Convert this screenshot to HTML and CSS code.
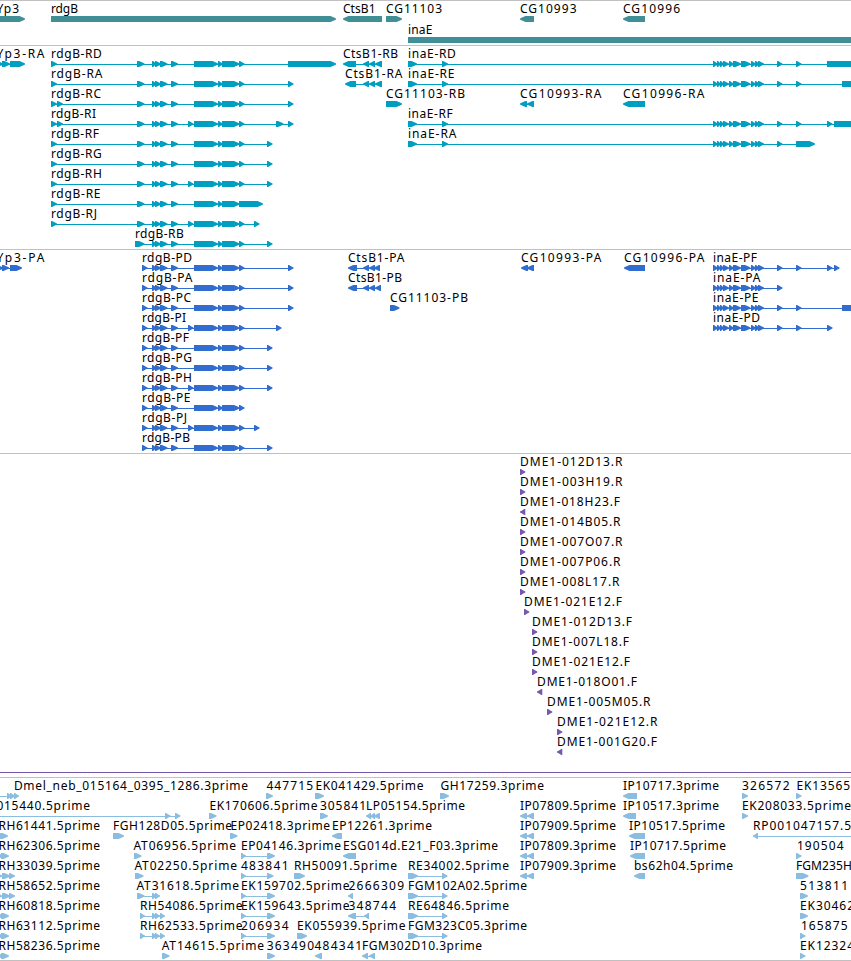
FILE: index.html
```html
<!DOCTYPE html>
<html lang="en">
<head>
<meta charset="utf-8">
<title>Genome tracks</title>
<link rel="stylesheet" href="styles.css">
</head>
<body>
<main class="browser">
  <section class="track track-gene" id="gene"></section>
  <section class="track track-mrna" id="mrna"></section>
  <section class="track track-protein" id="protein"></section>
  <section class="track track-clone" id="clone"></section>
  <section class="track track-est" id="est"></section>
</main>
<script src="tracks.js"></script>
</body>
</html>
```
FILE: styles.css
```css
body {
  margin: 0;
  background: #fff;
}

.browser {
  display: flex;
  flex-direction: column;
  width: 851px;
  height: 961px;
  overflow: hidden;
}

.track {
  box-sizing: border-box;
  flex: none;
  border-top: 1px solid #c0c0c0;
  overflow: hidden;
}

.track-gene { height: 45px; color: #408f96; }
.track-mrna { height: 204px; color: #009fc1; }
.track-protein { height: 204px; color: #316dce; }
.track-clone { height: 324px; color: #7758ae; }
.track-est { height: 184px; color: #8abddf; border-bottom: 1px solid #c0c0c0; }

.row {
  display: block;
  width: 851px;
  height: 20px;
  overflow: visible;
}

.track-gene .row { height: 21px; }

.label {
  font-family: "Noto Sans", "Open Sans", sans-serif;
  font-size: 12px;
  fill: #000;
}

.feature { fill: currentColor; }

.span { shape-rendering: crispEdges; fill: currentColor; }
```
FILE: tracks.js
```js
const NS = 'http://www.w3.org/2000/svg';

// A feature is [name, labelStart, labelEnd, parts, direction, lineEnd].
// Parts are [start, end] pairs joined by a thin line.
const body = [[152, 157], [155, 161], [160, 167.5], [171, 178]];
const extra = [[188, 193.5]];
const tail = [[194, 218], [218, 223], [222, 239.5]];
const last = [[239, 244.5]];
const rdg = (head, more, end) => [...head, [137, 144.5], ...body, ...more, ...tail, ...end];
const rdgP = (more, end) => [[142, 147.5], ...body, ...more, ...tail, ...last, ...end];
const ina = [[713, 718], [717, 721.5], [720, 724.5], [723, 729], [729, 734], [733, 741],
  [741, 750.5], [751, 756], [755, 760], [758, 764], [777, 782.5]];
const inaR = [[408, 417], [442, 448], ...ina];
const s = [[51, 57]], s2 = [[51, 57], [57, 63]];
const e = x => [[x, x + 5.5]];
const L = -1, R = 1;
const yp = (n, parts) => [n, -3, 44, parts];
const rh = (n, parts) => [n, -1, 99.5, parts];
const two = [[-5, 3], [1, 9]], three = [[-5, 2], [2, 10], [9, 15]];
const pair = [[241, 246], [267, 275]];
const re = [[408, 418], [442, 447.5]];
const ip = n => [n, 520.5, 615.5, [[520, 527], [527, 534]], L];

const tracks = {
  gene: [
    [['Yp3', -3, 18.5, [[-20, 25]]], ['rdgB', 51.5, 77.5, [[51, 336]]],
      ['CtsB1', 343.5, 375, [[343, 382]], L], ['CG11103', 386.5, 441.5, [[386, 402]]],
      ['CG10993', 520.5, 576, [[520, 534]], L], ['CG10996', 623.5, 679.5, [[623, 645]], L]],
    [['inaE', 408.5, 432, [[408, 900]]]]
  ],
  mrna: [
    [yp('Yp3-RA', [[-5, 3], [2, 10], [10, 25]]),
      ['rdgB-RD', 51.5, 101.3, [...rdg(s, [], last), [288, 336]]],
      ['CtsB1-RB', 343.5, 397.5, [[343, 356], [363, 369], [369, 375], [375, 382]], L],
      ['inaE-RD', 408.5, 455.3, [...inaR, [796, 801.5], [827, 900]]]],
    [['rdgB-RA', 51.5, 102, rdg(s, [], [...last, ...e(288)])],
      ['CtsB1-RA', 345.5, 402, [[345, 356], [363, 369], [369, 375], [375, 382]], L],
      ['inaE-RE', 408.5, 454, [...inaR, [796, 801.5], [842, 900]]]],
    [['rdgB-RC', 51.5, 100.5, rdg(s2, [], [...last, ...e(288)])],
      ['CG11103-RB', 386.5, 464.5, [[386, 402]]],
      ['CG10993-RA', 520.5, 601, [[520, 527], [527, 534]], L],
      ['CG10996-RA', 623.5, 704, [[623, 645]], L]],
    [['rdgB-RI', 51.5, 95.5, rdg(s2, extra, [...last, [276, 283.5], ...e(288)])],
      ['inaE-RF', 408.5, 452.3, [...inaR, [796, 801.5], [827, 832.5], [834, 900]]]],
    [['rdgB-RF', 51.5, 98.5, rdg(s, [], [...last, ...e(267)])],
      ['inaE-RA', 408.5, 456, [...inaR, [796, 815]]]],
    [['rdgB-RG', 51.5, 101.3, rdg(s, [], [...last, ...e(267)])]],
    [['rdgB-RH', 51.5, 101.3, rdg(s, extra, [...last, ...e(267)])]],
    [['rdgB-RE', 51.5, 100, rdg(s, [], [[239, 263]])]],
    [['rdgB-RJ', 51.5, 96.5, rdg(s, extra, [...last, ...e(254)])]],
    [['rdgB-RB', 135.5, 183.3, [[135, 144.5], ...body, ...tail, ...last, ...e(267)]]]
  ],
  protein: [
    [yp('Yp3-PA', [[-5, 3], [2, 9], [10, 22]]), ['rdgB-PD', 142.5, 191.5, rdgP([], e(288))],
      ['CtsB1-PA', 348.5, 404, [[348, 357], [363, 369], [369, 375], [374, 380]], L],
      ['CG10993-PA', 521.5, 601, [[521, 528], [527, 534]], L],
      ['CG10996-PA', 624.5, 704, [[624, 645]], L],
      ['inaE-PF', 713.5, 756.5, [...ina, [796, 801.5], [827, 832.5], [834, 839.5]]]],
    [['rdgB-PA', 142.5, 192, rdgP([], e(288))],
      ['CtsB1-PB', 348.5, 401.5, [[348, 357], [363, 369], [369, 375], [375, 381]], L],
      ['inaE-PA', 713.5, 760, ina]],
    [['rdgB-PC', 142.5, 190.5, rdgP([], e(288))], ['CG11103-PB', 390.5, 467.5, [[390, 399.5]]],
      ['inaE-PE', 713.5, 758, [...ina, [796, 801.5], [842, 900]]]],
    [['rdgB-PI', 142.5, 185.5, rdgP(extra, e(276))],
      ['inaE-PD', 713.5, 759.5, [...ina, [796, 801.5], [827, 832.5]]]],
    [['rdgB-PF', 142.5, 188.5, rdgP([], e(267))]],
    [['rdgB-PG', 142.5, 191.5, rdgP([], e(267))]],
    [['rdgB-PH', 142.5, 191.5, rdgP(extra, e(267))]],
    [['rdgB-PE', 142.5, 190, rdgP([], [])]],
    [['rdgB-PJ', 142.5, 186.5, rdgP(extra, e(254))]],
    [['rdgB-PB', 142.5, 189.5, rdgP([], e(267))]]
  ],
  clone: [
    ['DME1-012D13.R', 520, 622], ['DME1-003H19.R', 520, 622], ['DME1-018H23.F', 520, 619.5, L],
    ['DME1-014B05.R', 520, 620], ['DME1-007O07.R', 520, 622], ['DME1-007P06.R', 520, 620],
    ['DME1-008L17.R', 520, 619], ['DME1-021E12.F', 524, 621.5], ['DME1-012D13.F', 532, 631.5],
    ['DME1-007L18.F', 532, 628.5], ['DME1-021E12.F', 532, 629.5], ['DME1-018O01.F', 537, 636.5, L],
    ['DME1-005M05.R', 547, 650], ['DME1-021E12.R', 557, 657], ['DME1-001G20.F', 557, 656.5, L]
  ].map(([n, a, b, d]) => [[n, a + 0.7, b, [[a, a + 5.3]], d]]).concat([[['', 0, 0, [[-20, -10], [900, 920]]]]]),
  est: [
    [['Dmel_neb_015164_0395_1286.3prime', 14.5, 247.5, [[-20, -10], [7, 12], [10, 15], [14, 19]]],
      ['447715', 267, 312.5, [[266, 273]]], ['EK041429.5prime', 316, 423, [[315, 324]]],
      ['GH17259.3prime', 441, 543.5, [[440, 449]]], ['IP10717.3prime', 623.5, 718.5, [[623, 637]], L],
      ['326572', 742.5, 789, [[742, 748]]], ['EK13565', 797, 849.5, [[796, 801.5]]]],
    [['015440.5prime', -3, 89.5, [[-20, -10], [165, 170.5], [175, 180.5]]],
      ['EK170606.5prime', 210, 317, [[209, 216.5]]], ['305841', 320.5, 365.5, [[320, 328]]],
      ['LP05154.5prime', 366.5, 464.5, [[366, 371], [370, 375], [374, 380]], L],
      ip('IP07809.5prime'), ['IP10517.3prime', 623.5, 718.5, [[623, 636]], L],
      ['EK208033.5prime', 742.5, 850.5, [[742, 748]]]],
    [rh('RH61441.5prime', [[-5, 2], [0, 8]]), ['FGH128D05.5prime', 113.5, 231.5, [[113, 124]]],
      ['EP02418.3prime', 231, 329.5, [[230, 237.5]]], ['EP12261.3prime', 332.5, 431.5, [[332, 342]], L],
      ip('IP07909.5prime'), ['IP10517.5prime', 629.5, 724.5, [[629, 645]], L],
      ['RP001047157.5', 753.5, 850.5, [[753, 758], [900, 920]], L]],
    [rh('RH62306.5prime', two), ['AT06956.5prime', 134, 235.5, [[134, 141.5]]],
      ['EP04146.3prime', 241.5, 340.5, pair], ['ESG014d.E21_F03.3prime', 343.7, 497.5, [[343, 356]], L],
      ip('IP07809.3prime'), ['IP10717.5prime', 630.5, 725.5, [[630, 645]], L],
      ['190504', 797.5, 843, [[796, 801.5]]]],
    [rh('RH33039.5prime', three), ['AT02250.5prime', 135, 236.5, [[135, 143.5]]],
      ['483841', 241.5, 288, [[241, 246], [267, 273.5]]], ['RH50091.5prime', 294.5, 396.5, [[294, 305]]],
      ['RE34002.5prime', 408.5, 508.5, re], ip('IP07909.3prime'),
      ['bs62h04.5prime', 634.5, 732.5, [[634, 645]], L], ['FGM235H', 796.5, 851.5, [[796, 808.5]]]],
    [rh('RH58652.5prime', three), ['AT31618.5prime', 137, 238.5, [[137, 144.5], [152, 157], [155, 160]]],
      ['EK159702.5prime', 241.5, 349, pair], ['2666309', 349, 403.5, [[348, 353]], L],
      ['FGM102A02.5prime', 408.5, 526.5, re], ['513811', 800.5, 847.5, [[800, 808]]]],
    [rh('RH60818.5prime', two), ['RH54086.5prime', 140.5, 242, [[140, 145], [152, 157], [155, 160], [160, 165]]],
      ['EK159643.5prime', 241.5, 349, pair], ['348744', 349, 395.5, [[348, 356], [364, 369]], L],
      ['RE64846.5prime', 408.5, 508.5, re], ['EK30462', 800.5, 853.5, [[800, 808]]]],
    [rh('RH63112.5prime', two), ['RH62533.5prime', 140.5, 242, [[140, 145], [152, 157], [155, 160], [160, 165]]],
      ['206934', 241.5, 288, pair], ['EK055939.5prime', 297.5, 405, [[297, 307]]],
      ['FGM323C05.3prime', 408.5, 526.5, re], ['165875', 801.5, 847, [[800, 805.5]]]],
    [rh('RH58236.5prime', two), ['AT14615.5prime', 162.3, 263.5, [[162, 169.5]]],
      ['363490', 267.3, 313.5, [[267, 275]]], ['484341', 315, 361.5, [[315, 322]], L],
      ['FGM302D10.3prime', 362.7, 481.5, [[362, 368], [369, 375]], L],
      ['EK12324', 800.5, 853.5, [[800, 805.5]]]]
  ]
};

function add(parent, tag, attrs) {
  const node = document.createElementNS(NS, tag);
  for (const k in attrs) node.setAttribute(k, attrs[k]);
  parent.appendChild(node);
  return node;
}

function shape([a, b], dir) {
  const head = Math.min(5.5, b - a - 1);
  return dir === L
    ? `M${b} 15H${a + head}L${a + 2} 16.4L${a} 17.4V18.6L${a + 2} 19.6L${a + head} 21H${b}Z`
    : `M${a} 15H${b - head}L${b - 2} 16.4L${b} 17.4V18.6L${b - 2} 19.6L${b - head} 21H${a}Z`;
}

for (const id in tracks) {
  for (const features of tracks[id]) {
    const row = add(document.getElementById(id), 'svg', { class: 'row' });
    for (const [name, from, to, parts, dir] of features) {
      if (parts.length > 1) {
        const start = parts[0][0] + 2;
        add(row, 'rect', { class: 'span', x: start, y: 18, width: parts[parts.length - 1][1] - 2 - start, height: 1 });
      }
      add(row, 'path', { class: 'feature', d: parts.map(p => shape(p, dir)).join('') });
      if (name) {
        const text = add(row, 'text', {
          class: 'label', x: from - 0.6, y: 12, textLength: to - from + 1.1, lengthAdjust: 'spacing'
        });
        text.textContent = name;
      }
    }
  }
}
```
